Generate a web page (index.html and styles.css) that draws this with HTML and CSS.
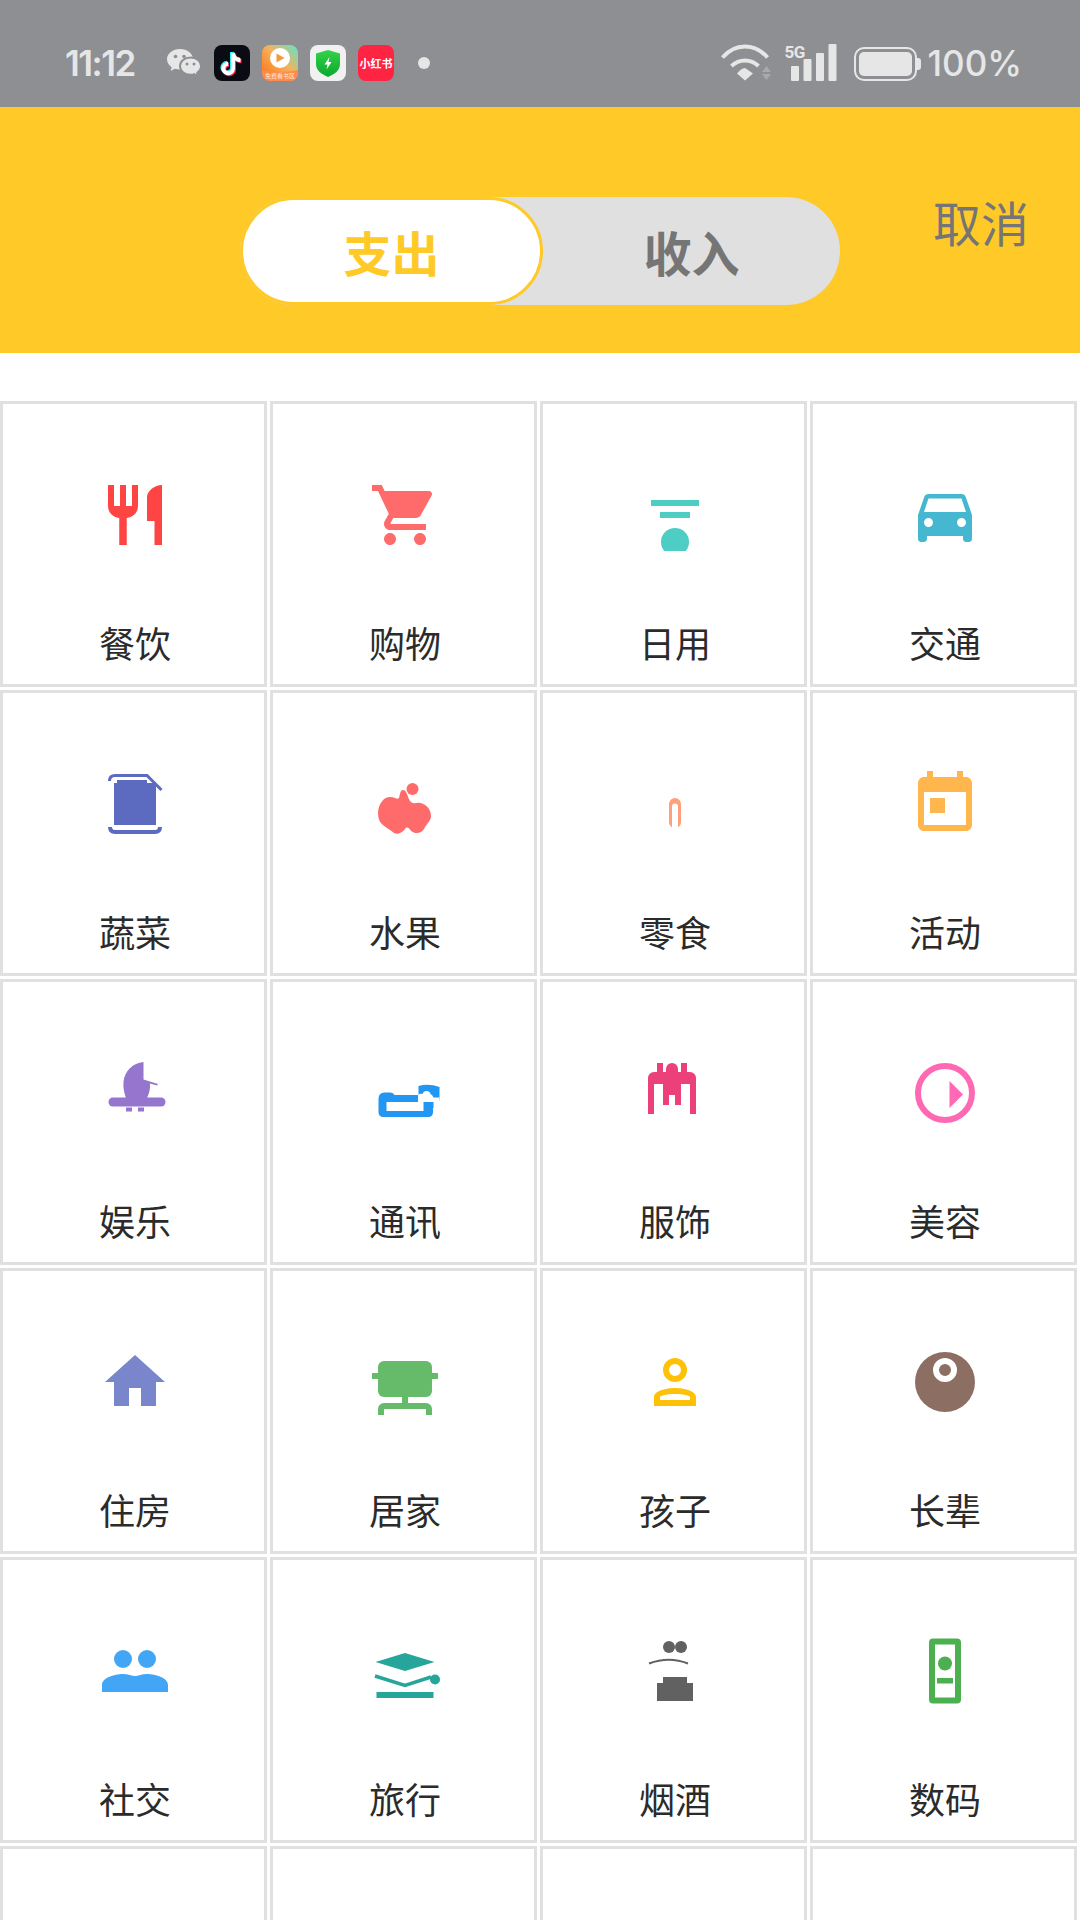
FILE: index.html
```html
<!DOCTYPE html>
<html lang="zh-CN">
<head>
    <meta charset="UTF-8">
    <meta name="viewport" content="width=device-width, initial-scale=1.0">
    <title>记一笔</title>
    <link rel="stylesheet" href="styles.css">
</head>
<body>

    <div class="app">
        <!-- Status bar -->
        <div class="status-bar">
            <span class="time">11:12</span>
            <svg class="wechat" width="36" height="30" viewBox="0 0 36 30">
                <path fill="#e6e6e6" d="M14 1C6.8 1 1 5.6 1 11.3c0 3.2 1.8 6 4.7 7.9L4.6 23l4.2-2.2c1.6.5 3.400.8 5.200.8 7.200 0 13-4.600 13-10.300S21.200 1 14 1z"/>
                <circle cx="9.500" cy="8.500" r="1.800" fill="#8e8f93"/>
                <circle cx="18" cy="8.500" r="1.800" fill="#8e8f93"/>
                <path fill="#e6e6e6" stroke="#8e8f93" stroke-width="2" d="M24.500 9.500c-6 0-10.500 3.800-10.500 8.600s4.500 8.600 10.500 8.600c1.300 0 2.600-.2 3.700-.6l4 2.400-1-3.800c2.300-1.600 3.800-4 3.800-6.600 0-4.800-4.500-8.600-10.500-8.600z"/>
                <circle cx="21" cy="16" r="1.500" fill="#8e8f93"/>
                <circle cx="28" cy="16" r="1.500" fill="#8e8f93"/>
            </svg>
            <svg class="app-icon" width="36" height="36" viewBox="0 0 36 36">
                <rect width="36" height="36" rx="8" fill="#0b0b14"/>
                <path fill="none" stroke="#25f4ee" stroke-width="4" d="M18 7v15.500a4.800 4.800 0 1 1-4.800-4.800M18 7c.3 4 3.200 7 7.500 7.300"/>
                <path fill="none" stroke="#fe2c55" stroke-width="4" d="M20 9v15.500a4.800 4.800 0 1 1-4.800-4.800M20 9c.3 4 3.200 7 7.500 7.300"/>
                <path fill="none" stroke="#fff" stroke-width="4" d="M19 8v15.500a4.800 4.800 0 1 1-4.800-4.800M19 8c.3 4 3.200 7 7.500 7.300"/>
            </svg>
            <svg class="app-icon" width="36" height="36" viewBox="0 0 36 36">
                <defs>
                    <linearGradient id="videoBg" x1="0" y1="1" x2="1" y2="0">
                        <stop offset="0" stop-color="#ff6a12"/>
                        <stop offset="0.55" stop-color="#f3b35a"/>
                        <stop offset="1" stop-color="#5fe3cf"/>
                    </linearGradient>
                    <clipPath id="videoClip"><rect width="36" height="36" rx="8"/></clipPath>
                </defs>
                <g clip-path="url(#videoClip)">
                    <rect width="36" height="36" fill="url(#videoBg)"/>
                    <path fill="#ff8a4c" d="M0 25q18 4 36 0v11H0z"/>
                    <rect x="8" y="3" width="20" height="20" rx="10" fill="#fff"/>
                    <path fill="#f59a3c" d="M14.500 8.500l8 4.500-8 4.500z"/>
                    <text class="tiny" x="18" y="33" text-anchor="middle">免费看书区</text>
                </g>
            </svg>
            <svg class="app-icon" width="36" height="36" viewBox="0 0 36 36">
                <defs>
                    <linearGradient id="shieldBg" x1="0" y1="0" x2="0" y2="1">
                        <stop offset="0" stop-color="#35d24a"/>
                        <stop offset="1" stop-color="#0aa82c"/>
                    </linearGradient>
                </defs>
                <rect width="36" height="36" rx="8" fill="#f1f1f1"/>
                <path fill="url(#shieldBg)" d="M18 5l12 3.500V19c0 6-5 10-12 13-7-3-12-7-12-13V8.500z"/>
                <path fill="#fff" d="M19.500 12l-5 7.500h3l-1 5 5-7.500h-3z"/>
            </svg>
            <span class="rednote">小红书</span>
            <span class="dot"></span>

            <div class="status-right">
                <svg width="50" height="37" viewBox="0 0 50 37">
                    <g fill="none" stroke="#e6e6e6" stroke-width="4">
                        <path d="M1.500 13.500C8 6 16 2.500 24 2.500s16 3.500 22.500 11"/>
                        <path d="M10.500 22c4-3.800 8.500-5.500 13.500-5.500s9.500 1.700 13.500 5.500"/>
                    </g>
                    <path fill="#e6e6e6" d="M24 24l8 5.500-8 7-8-7c2.500-3 5-5.500 8-5.500z"/>
                    <path fill="#a8a9ac" d="M45.500 22l4.500 6h-9zM45.500 36l4.500-6h-9z"/>
                </svg>
                <div class="signal">
                    <span class="net">5G</span>
                    <svg width="46" height="37" viewBox="0 0 46 37">
                        <rect x="0" y="22" width="8" height="15" rx="1" fill="#e6e6e6"/>
                        <rect x="0" y="0" width="0" height="0"/>
                        <rect x="12.500" y="15" width="8" height="22" rx="1" fill="#e6e6e6"/>
                        <rect x="25" y="9" width="8" height="28" rx="1" fill="#e6e6e6"/>
                        <rect x="37.500" y="0" width="8" height="37" rx="1" fill="#e6e6e6"/>
                    </svg>
                </div>
                <div class="battery"><span class="battery-fill"></span></div>
                <span class="percent">100%</span>
            </div>
        </div>

        <!-- Header -->
        <div class="header">
            <div class="tabs">
                <div class="tab active">支出</div>
                <div class="tab">收入</div>
            </div>
            <div class="cancel">取消</div>
        </div>

        <!-- Categories -->
        <div class="grid">
            <div class="cell">
                <svg class="icon" viewBox="0 0 24 24"><path fill="#ff4444" d="M11 9H9V2H7v7H5V2H3v7c0 2.120 1.660 3.840 3.750 3.970V22h2.500v-9.030C11.340 12.840 13 11.120 13 9V2h-2v7zm5-3v8h2.500v8H21V2c-2.760 0-5 2.240-5 4z"/></svg>
                <div class="label">餐饮</div>
            </div>
            <div class="cell">
                <svg class="icon" viewBox="0 0 24 24"><path fill="#ff6b6b" d="M7 18c-1.100 0-1.990.9-1.990 2S5.900 22 7 22s2-.9 2-2-.9-2-2-2zM1 2v2h2l3.600 7.590-1.350 2.450c-.16.280-.25.610-.25.960 0 1.100.9 2 2 2h12v-2H7.420c-.14 0-.25-.11-.25-.25l.03-.12.9-1.630h7.450c.75 0 1.410-.41 1.750-1.030l3.580-6.470c.08-.14.120-.31.120-.48 0-.55-.45-1-1-1H5.210l-.94-2H1zm16 16c-1.100 0-1.990.9-1.990 2s.89 2 1.990 2 2-.9 2-2-.9-2-2-2z"/></svg>
                <div class="label">购物</div>
            </div>
            <div class="cell">
                <svg class="icon" viewBox="0 0 72 72"><g fill="#4ecdc4"><rect x="12" y="21" width="48" height="6"/><rect x="21" y="33" width="30" height="6"/><circle cx="36" cy="63" r="14"/></g></svg>
                <div class="label">日用</div>
            </div>
            <div class="cell">
                <svg class="icon" viewBox="0 0 24 24"><path fill="#45b7d1" d="M18.920 6.010C18.720 5.420 18.160 5 17.500 5h-11c-.66 0-1.210.42-1.420 1.010L3 12v8c0 .55.45 1 1 1h1c.55 0 1-.45 1-1v-1h12v1c0 .55.45 1 1 1h1c.55 0 1-.45 1-1v-8l-2.080-5.990zM6.500 16c-.83 0-1.500-.67-1.500-1.500S5.670 13 6.500 13s1.500.67 1.500 1.500S7.330 16 6.500 16zm11 0c-.83 0-1.500-.67-1.500-1.500s.67-1.500 1.500-1.500 1.500.67 1.500 1.500-.67 1.500-1.500 1.500zM5 11l1.500-4.500h11L19 11H5z"/></svg>
                <div class="label">交通</div>
            </div>

            <div class="cell">
                <svg class="icon" viewBox="0 0 72 72">
                    <path fill="#5c6bc0" d="M18 12h30v3h9v42H15V15h3z"/>
                    <path fill="none" stroke="#5c6bc0" stroke-width="3" d="M10.500 13q0-5.500 5.500-5.500h32L62.500 22"/>
                    <path fill="none" stroke="#5c6bc0" stroke-width="4" d="M11 59q0 5 5 5h40q5 0 5-5"/>
                </svg>
                <div class="label">蔬菜</div>
            </div>
            <div class="cell">
                <svg class="icon" viewBox="0 0 72 72">
                    <g fill="#ff6b6b">
                        <circle cx="43.500" cy="21" r="6"/>
                        <path d="M34 22c4 0 4 6 7 11 3 4 7 1 10 2 6 1 11 6 11 13 0 5-4 7-7 13-3 5-9 5-13 2-2-3-4-5-6-2-3 4-8 6-11 4-3-3-8-5-11-8-4-3-5-8-5-13 1-9 6-15 12-15 5 0 7 3 9 1 1-3 1-8 4-8z"/>
                    </g>
                </svg>
                <div class="label">水果</div>
            </div>
            <div class="cell">
                <svg class="icon" viewBox="0 0 72 72"><path fill="#ffa07a" d="M30 36a6 6 0 0 1 12 0v18a6 6 0 0 1-3 5.200V38.500a3 3 0 0 0-6 0v20.700a6 6 0 0 1-3-5.200z"/></svg>
                <div class="label">零食</div>
            </div>
            <div class="cell">
                <svg class="icon" viewBox="0 0 24 24"><path fill="#ffb74d" d="M19 3h-1V1h-2v2H8V1H6v2H5c-1.110 0-1.990.9-1.990 2L3 19c0 1.100.89 2 2 2h14c1.100 0 2-.9 2-2V5c0-1.100-.9-2-2-2zm0 16H5V8h14v11zM7 10h5v5H7z"/></svg>
                <div class="label">活动</div>
            </div>

            <div class="cell">
                <svg class="icon" viewBox="0 0 72 72">
                    <g fill="#9575cd">
                        <path d="M44.500 5v17.500L59 27l-1 1.500-7-2c.5 5.500-1 10.500-3 14.500H27c-2-5-3-11-2.500-16C25.500 14 34 6 44.500 5z"/>
                        <rect x="9.500" y="40.500" width="57" height="9" rx="4.500"/>
                        <rect x="27" y="50.500" width="6" height="4"/>
                        <rect x="39" y="50.500" width="6" height="4"/>
                    </g>
                </svg>
                <div class="label">娱乐</div>
            </div>
            <div class="cell">
                <svg class="icon" viewBox="0 0 72 72">
                    <path fill="#2196f3" d="M9.500 42q0-6.500 6-6.500h6q3 0 4 2.500h38.500v17q0 5-5 5H14.500q-5 0-5-5z"/>
                    <rect x="17.500" y="45" width="37" height="9" fill="#fff"/>
                    <path fill="#2196f3" d="M49.500 29q10-3 21 1v14l-21-1z"/>
                    <path fill="#fff" d="M49 38q2-2 4.500-1 1-3 4-3 3.500 0 4 3 2 .5 3 3.500h6V45H49z"/>
                    <path fill="#2196f3" d="M60 45h4.500v6H60z"/>
                </svg>
                <div class="label">通讯</div>
            </div>
            <div class="cell">
                <svg class="icon" viewBox="0 0 72 72">
                    <g fill="#ec407a">
                        <path d="M9 57V21a6 6 0 0 1 6-6h36a6 6 0 0 1 6 6v36h-6V27h-9v21h-6V38h-6v10h-6V27h-9v30z"/>
                        <rect x="18" y="6" width="6" height="10"/>
                        <rect x="42" y="6" width="6" height="10"/>
                        <circle cx="33" cy="12" r="6"/>
                        <rect x="27" y="12" width="12" height="4"/>
                    </g>
                </svg>
                <div class="label">服饰</div>
            </div>
            <div class="cell">
                <svg class="icon" viewBox="0 0 72 72">
                    <circle cx="36" cy="36" r="27" fill="none" stroke="#ff69b4" stroke-width="6"/>
                    <path fill="#ff69b4" d="M40.500 24L54 37.500 40.500 51z"/>
                </svg>
                <div class="label">美容</div>
            </div>

            <div class="cell">
                <svg class="icon" viewBox="0 0 24 24"><path fill="#7986cb" d="M10 20v-6h4v6h5v-8h3L12 3 2 12h3v8z"/></svg>
                <div class="label">住房</div>
            </div>
            <div class="cell">
                <svg class="icon" viewBox="0 0 72 72">
                    <g fill="#66bb6a">
                        <rect x="9" y="15" width="54" height="36" rx="6"/>
                        <rect x="3" y="27" width="66" height="6"/>
                        <rect x="33" y="50" width="6" height="8"/>
                        <path d="M9 69v-6a6 6 0 0 1 6-6h42a6 6 0 0 1 6 6v6h-6v-6H15v6z"/>
                    </g>
                </svg>
                <div class="label">居家</div>
            </div>
            <div class="cell">
                <svg class="icon" viewBox="0 0 72 72">
                    <circle cx="36" cy="24" r="9" fill="none" stroke="#ffc107" stroke-width="6"/>
                    <path fill="#ffc107" fill-rule="evenodd" d="M15 60v-9c0-6 12-9 21-9s21 3 21 9v9zM21 54h30v-3c0-1.500-7-3-15-3s-15 1.500-15 3z"/>
                </svg>
                <div class="label">孩子</div>
            </div>
            <div class="cell">
                <svg class="icon" viewBox="0 0 72 72">
                    <circle cx="36" cy="36" r="30" fill="#8d6e63"/>
                    <circle cx="36" cy="24" r="9" fill="none" stroke="#fff" stroke-width="6"/>
                </svg>
                <div class="label">长辈</div>
            </div>

            <div class="cell">
                <svg class="icon" viewBox="0 0 72 72">
                    <g fill="#42a5f5">
                        <circle cx="24" cy="24" r="9"/>
                        <circle cx="48" cy="24" r="9"/>
                        <path d="M3 57v-7c0-7 12-11 21-11 5 0 9 2 12 2s7-2 12-2c9 0 21 4 21 11v7z"/>
                    </g>
                </svg>
                <div class="label">社交</div>
            </div>
            <div class="cell">
                <svg class="icon" viewBox="0 0 72 72">
                    <g fill="#26a69a">
                        <path d="M6.500 27L36 18l29.500 9L36 36z"/>
                        <circle cx="66" cy="44.500" r="5"/>
                        <rect x="7.500" y="57" width="57" height="6"/>
                    </g>
                    <path fill="none" stroke="#26a69a" stroke-width="3.500" d="M6 41l30 9.500L62 42"/>
                </svg>
                <div class="label">旅行</div>
            </div>
            <div class="cell">
                <svg class="icon" viewBox="0 0 72 72">
                    <g fill="#616161">
                        <circle cx="30" cy="12" r="6"/>
                        <circle cx="42" cy="12" r="6"/>
                        <rect x="24" y="42" width="24" height="7"/>
                        <rect x="18" y="48" width="36" height="18"/>
                    </g>
                    <path fill="none" stroke="#616161" stroke-width="2" d="M10 28.500Q30 21 49 28.500"/>
                </svg>
                <div class="label">烟酒</div>
            </div>
            <div class="cell">
                <svg class="icon" viewBox="0 0 72 72">
                    <rect x="23" y="6.500" width="26" height="59" rx="1" fill="none" stroke="#4caf50" stroke-width="6"/>
                    <circle cx="36" cy="28.500" r="7" fill="#4caf50"/>
                    <rect x="28" y="43" width="16" height="5.500" fill="#4caf50"/>
                </svg>
                <div class="label">数码</div>
            </div>

            <!-- next row, cut off by the screen -->
            <div class="cell"></div>
            <div class="cell"></div>
            <div class="cell"></div>
            <div class="cell"></div>
        </div>
    </div>

</body>
</html>
```

FILE: styles.css
```css
* {
    box-sizing: border-box;
}

html, body {
    margin: 0;
    padding: 0;
    background: #fff;
}

body {
    font-family: "Noto Sans CJK SC", "Noto Sans", sans-serif;
}

.app {
    width: 1080px;
    height: 1920px;
    overflow: hidden;
}

/* Status bar */
.status-bar {
    display: flex;
    align-items: center;
    height: 107px;
    padding: 18px 58px 0 65px;
    background: #8e8f93;
    color: #e6e6e6;
}

.time {
    width: 76px;
    font-family: Inter, sans-serif;
    font-size: 35px;
    font-weight: 600;
    letter-spacing: -1.5px;
    white-space: nowrap;
}

.wechat {
    margin-left: 25px;
    margin-right: 12px;
}

.app-icon {
    margin-right: 12px;
    flex-shrink: 0;
}

.tiny {
    font-size: 6px;
    fill: #ffe9d8;
}

.rednote {
    display: flex;
    align-items: center;
    justify-content: center;
    width: 36px;
    height: 36px;
    border-radius: 8px;
    background: #ff2442;
    color: #fff;
    font-size: 11px;
    font-weight: 700;
    white-space: nowrap;
}

.dot {
    width: 12px;
    height: 12px;
    margin-left: 24px;
    border-radius: 50%;
    background: #e6e6e6;
}

.status-right {
    display: flex;
    align-items: flex-end;
    height: 37px;
    margin-left: auto;
}

.signal {
    display: flex;
    position: relative;
    width: 46px;
    height: 37px;
    margin-left: 20px;
}

/* sits on top of the shorter bars */
.net {
    position: absolute;
    left: -6px;
    top: -2px;
    font-family: "Roboto", sans-serif;
    font-size: 17px;
    font-weight: 700;
    line-height: 20px;
    letter-spacing: -0.5px;
}

.battery {
    position: relative;
    width: 63px;
    height: 34px;
    margin-left: 17px;
    padding: 3px;
    border: 2px solid #e6e6e6;
    border-radius: 10px;
}

.battery::after {
    content: "";
    position: absolute;
    right: -6px;
    top: 9px;
    width: 4px;
    height: 12px;
    border-radius: 0 3px 3px 0;
    background: #e6e6e6;
}

.battery-fill {
    display: block;
    height: 100%;
    border-radius: 5px;
    background: #e6e6e6;
}

.percent {
    margin-left: 11px;
    font-family: Inter, sans-serif;
    font-size: 35px;
    font-weight: 500;
    line-height: 36px;
    white-space: nowrap;
}

/* Header */
.header {
    display: grid;
    grid-template-columns: 1fr 600px 1fr;
    height: 246px;
    padding-top: 90px;
    background: #ffc928;
}

.tabs {
    grid-column: 2;
    display: flex;
    height: 108px;
    border-radius: 54px;
    background: #e0e0e0;
}

.tab {
    display: flex;
    align-items: center;
    justify-content: center;
    flex: 1;
    border-radius: 54px;
    color: #757575;
    font-size: 48px;
    font-weight: 700;
}

.tab.active {
    border: 3px solid #ffc928;
    background: #fff;
    color: #ffc928;
}

.cancel {
    justify-self: end;
    align-self: start;
    margin-top: -6px;
    margin-right: 51px;
    color: #757575;
    font-size: 48px;
    line-height: 60px;
    white-space: nowrap;
}

/* Categories */
.grid {
    display: grid;
    grid-template-columns: repeat(4, 267px);
    grid-auto-rows: 286px;
    gap: 3px;
    padding-top: 48px;
}

.cell {
    display: flex;
    flex-direction: column;
    align-items: center;
    padding: 75px 0 0 3px;
    border: 3px solid #e0e0e0;
}

.icon {
    display: block;
    width: 72px;
    height: 72px;
    flex-shrink: 0;
}

.label {
    margin-top: 66px;
    color: #2b2b2b;
    font-size: 36px;
    line-height: 50px;
}
```
